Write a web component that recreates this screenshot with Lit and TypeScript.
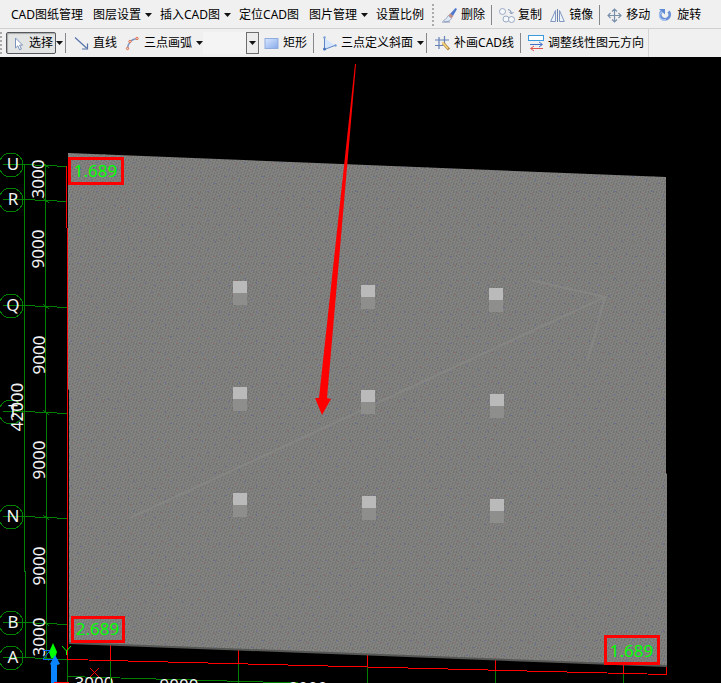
import { LitElement, html, svg, css, nothing, TemplateResult, SVGTemplateResult } from "lit";
import { customElement, property } from "lit/decorators.js";

type IconName =
  | "cursor" | "line" | "arc" | "rect" | "slope" | "patch" | "direction"
  | "erase" | "copy" | "mirror" | "move" | "rotate";

const icons: Record<IconName, SVGTemplateResult> = {
  cursor: svg`<path d="M4.5 2v10l2.3-2.2 1.8 4 1.8-.8-1.8-3.9h3z" fill="#fff" stroke="#7c93bd"/>`,
  line: svg`<path d="M1 1.5l11.500 10.500M13.500 7.500v5.500h-5.500" fill="none" stroke="#5672a8" stroke-width="1.200"/>`,
  arc: svg`<path d="M2.500 13Q3 4 11.500 2.500" fill="none" stroke="#7e95c4" stroke-width="1.300"/>
    <g fill="#fbd8cc" stroke="#e0704e"><circle cx="2.500" cy="12.500" r="1.200"/><circle cx="5" cy="5.500" r="1.200"/><circle cx="12" cy="2.500" r="1.200"/></g>`,
  rect: svg`<defs><linearGradient id="g" x2="1" y2="1"><stop stop-color="#dbe8ff"/><stop offset="1" stop-color="#86a9ea"/></linearGradient></defs>
    <rect x="1" y="2.500" width="13" height="10" fill="url(#g)" stroke="#90abdd"/>`,
  slope: svg`<path d="M2.500 2v11.500L13 9.500z" fill="#d5e5fb"/><path d="M2.500 1v12.500L14 9" fill="none" stroke="#5f86c4"/><circle cx="2.500" cy="1.500" r="1.200" fill="#7b9fd6"/><circle cx="2.500" cy="13" r="1.500" fill="#4674bc"/><circle cx="13.500" cy="9.500" r="1.200" fill="#7b9fd6"/>`,
  patch: svg`<path d="M4 1v12M9.500 0v8M0 4h14M0 9.500h8" fill="none" stroke="#6680b8" stroke-width="1.200"/><path d="M8 7l6 6.500" stroke="#b48a48" stroke-width="3"/><path d="M7 6l6 6.500" stroke="#f3d47c" stroke-width="1.500"/>`,
  direction: svg`<rect x="-.5" y="-.5" width="15" height="5" fill="#fff" stroke="#3a9be0"/><path d="M1 8.500h12M10 6l3.500 2.500L10 11" fill="none" stroke="#4472c8"/><path d="M14 12.500H2M5 10l-3.500 2.500L5 15" fill="none" stroke="#e0574f"/>`,
  erase: svg`<path d="M13.500 0l1.500 1-4 7-3-2z" fill="#4f78cc"/><path d="M8 5.500l3.300 2.500-1.600 2.300-3.500-2.500z" fill="#c78c86"/><path d="M6.200 7.500l3.500 3q-1.800 3-6.200 3.500l-2-1.500q3-1 4.700-5z" fill="#dfe8f6" stroke="#8b96ac" stroke-width=".7"/><path d="M0 14h8" stroke="#8194b8"/>`,
  copy: svg`<g fill="#f4f7fb" stroke="#9aaac2"><circle cx="3.500" cy="3.500" r="3"/><circle cx="7" cy="11" r="3"/><circle cx="12.500" cy="11.500" r="3"/></g><path d="M9 1.500q3 0 3.500 4M10.500 4l2 2 2-2" fill="none" stroke="#7890b5"/>`,
  mirror: svg`<path d="M5.500 2.500v11H.7zM9.500 2.500v11h4.800z" fill="#edf3fa" stroke="#8298c2"/><path d="M7.500 1v13" stroke="#6a82ae"/>`,
  move: svg`<path d="M7.500 1v13M1 7.500h13M5 3.500l2.500-2.500L10 3.500M5 11.500l2.500 2.500 2.500-2.500M3.500 5L1 7.500 3.500 10M11.500 5L14 7.500 11.500 10" fill="none" stroke="#7890aa" stroke-width="1.200"/>`,
  rotate: svg`<path d="M3.500 3.500A4.700 4.700 0 1 0 10.500 3.500" fill="none" stroke="#6a90d6" stroke-width="2.800"/><path d="M3.700 4A4.300 4.300 0 0 0 8 11.500" fill="none" stroke="#a9c5f2" stroke-width="1.500"/><path d="M1 1h6v5.500z" fill="#5f8bd6"/>`,
};

@customElement("tool-item")
class ToolItem extends LitElement {
  @property() label = "";
  @property() icon?: IconName;
  @property({ type: Boolean }) menu = false;
  @property({ type: Boolean }) pressed = false;

  static styles = css`
    :host { display: flex; flex: none; }
    button {
      display: flex; align-items: center; gap: 4px;
      border: 0; padding: 0 4px; background: none; color: #000;
      font: 12px/20px "Noto Sans", "Noto Sans CJK SC", sans-serif;
      white-space: nowrap;
    }
    .plain { padding: 0 5px; }
    .menu { padding-right: 0; }
    .plain.menu { padding-right: 3px; }
    .pressed {
      height: 22px; padding: 0 2px 0 4px; gap: 3px;
      border: 1px solid #55585c; border-radius: 2px;
      background: #e3e4e4; box-shadow: inset 1px 1px 1px #aaa;
    }
    .icon { width: 15px; height: 15px; overflow: visible; }
    .arrow { width: 7px; height: 4px; }
    .split { padding: 0; }
  `;

  render(): TemplateResult {
    const arrow = html`<svg class="arrow" viewBox="0 0 7 4"><path d="M0 0h7L3.500 4z" fill="#111"/></svg>`;
    const cls = [this.icon ? "" : "plain", this.menu && !this.pressed ? "menu" : "", this.pressed ? "pressed" : ""].join(" ");
    return html`<button type="button" class=${cls} aria-pressed=${this.pressed ? "true" : nothing}>
        ${this.icon ? html`<svg class="icon" viewBox="0 0 15 15">${icons[this.icon]}</svg>` : nothing}
        <span>${this.label}</span>
        ${this.menu && !this.pressed ? arrow : nothing}
      </button>
      ${this.pressed ? html`<button type="button" class="split" aria-label=${this.label}>${arrow}</button>` : nothing}`;
  }
}

const axes: [string, number][] = [["U", 165], ["R", 200], ["Q", 306], ["T", 412], ["N", 517], ["B", 623], ["A", 658]];
const spans: [string, number, number][] = [
  ["3000", 44, 179], ["9000", 44, 249], ["9000", 45, 355], ["9000", 45, 460],
  ["9000", 45, 566], ["3000", 45, 637], ["42000", 23, 407],
];
const columns: [number, number][] = [
  [233, 281], [361, 285], [489, 288],
  [233, 387], [361, 390], [490, 394],
  [233, 493], [362, 496], [490, 499],
];
const tags: [string, number, number, number, number][] = [
  ["1.689", 69, 158, 53, 25], ["2.689", 72, 617, 51, 24], ["1.689", 605, 636, 53, 27],
];
const stubs: [number, number, number][] = [[110, 645, 660], [238, 650, 663], [367, 655, 667], [495, 660, 670], [623, 665, 673]];

@customElement("model-view")
class ModelView extends LitElement {
  static styles = css`
    :host { display: block; background: #000; }
    svg { display: block; width: 100%; height: auto; }
    text { font-family: "Noto Sans", sans-serif; font-size: 17px; fill: #f2f2f2; text-anchor: middle; }
    .tag { fill: #0f0; }
    .grid { fill: none; stroke: #008000; shape-rendering: crispEdges; }
    .red { fill: none; stroke: #f00; shape-rendering: crispEdges; }
    .frame { fill: none; stroke: #f00; stroke-width: 3; shape-rendering: crispEdges; }
    .faint { fill: none; stroke: #858683; stroke-width: 2; }
  `;

  render(): TemplateResult {
    return html`<svg viewBox="0 57 721 626" role="img" aria-label="三维视图">
      <defs>
        <pattern id="grain" width="8" height="8" patternUnits="userSpaceOnUse">
          <rect width="8" height="8" fill="#7f807d"/>
          <path d="M0 0h1v1H0zM2 1h1v1H2zM5 0h1v1H5zM7 2h1v1H7zM4 3h1v1H4zM1 4h1v1H1zM6 5h1v1H6zM3 6h1v1H3zM0 7h1v1H0zM5 7h1v1H5z" fill="#6e706d"/>
          <path d="M1 2h1v1H1zM3 0h1v1H3zM6 1h1v1H6zM5 4h1v1H5zM2 5h1v1H2zM7 6h1v1H7zM4 7h1v1H4z" fill="#888986"/>
        </pattern>
        <pattern id="flecks" width="37" height="29" patternUnits="userSpaceOnUse">
          <path d="M3 2h2v1H3zM17 5h1v2H17zM29 9h2v1H29zM9 13h1v1H9zM22 17h2v1H22zM34 21h1v2H34zM6 24h2v1H6zM15 27h1v1H15z" fill="#6d6f92"/>
          <path d="M10 4h2v1H10zM24 2h1v1H24zM35 7h1v1H35zM4 10h1v1H4zM19 11h2v1H19zM13 19h2v1H13zM28 24h2v1H28zM20 22h1v1H20z" fill="#8d6c6c"/>
        </pattern>
      </defs>

      ${axes.map(([, y]) => svg`<circle class="grid" cx="11" cy=${y} r="12"/>
        <path class="grid" d="M3 ${y - 0.5}H24L46 ${y + 0.5}L67 ${y + 1.5}M43 ${y - 2}l6 5"/>`)}
      <path class="grid" d="M24.500 165V571L25.500 572V658M45.500 165V412L46.500 413V658M67.500 660V683M67 676.500L298 683"/>

      ${axes.map(([name, y]) => svg`<text x="13" y=${y + 5}>${name}</text>`)}
      ${spans.map(([label, x, y]) => svg`<text transform="translate(${x} ${y}) rotate(-90)">${label}</text>`)}
      <text x="94" y="689">3000</text><text x="179" y="691">9000</text><text x="308" y="694">9000</text>

      ${stubs.map(([x, a, b]) => svg`<path class="red" d="M${x + 0.5} ${a}V${b}"/><path class="grid" d="M${x + 0.5} ${b}V683"/>`)}
      <path class="red" d="M66.500 166V228M67.500 228V660M68 659.500L667 674.500M666.500 667V675"/>

      <path d="M69 641L667 664V667L69 644z" fill="#555755"/>
      <path d="M68 153L666 177V473L667 474V665L69 642V390L68 389z" fill="url(#grain)"/>
      <path d="M68 153L666 177V473L667 474V665L69 642V390L68 389z" fill="url(#flecks)"/>
      <path class="faint" d="M130 518L605 297M530 280L605 297L588 360"/>
      ${columns.map(([x, y]) => svg`<rect x=${x} y=${y + 12} width="14" height="12" fill="#8e8f8d"/><rect x=${x} y=${y} width="14" height="12" fill="#b9bab9"/>`)}

      <path d="M355 64L356 64L327 398L331 399L322 415L315 398L319 398z" fill="#f00"/>
      ${tags.map(([label, x, y, w, h]) => svg`<rect class="frame" x=${x + 0.5} y=${y + 0.5} width=${w} height=${h}/>
        <text class="tag" x=${x + w / 2} y=${y + h - 6}>${label}</text>`)}

      <path d="M53 643L57 652L55 658H51L49 652z" fill="#0f0"/>
      <path d="M43 659.500H58M43 650.500H50L43 659" fill="none" stroke="#0b6bff"/>
      <path d="M55 655L60 664L57 665V683H51V665L50 664z" fill="#0a84ff"/>
      <path d="M62 646l4.500 5 4.500-5M66.500 651v4" fill="none" stroke="#0f0"/>
      <path d="M90 668l9 9M99 668l-9 9M54 682.500H69" fill="none" stroke="#f00"/>
    </svg>`;
  }
}

@customElement("app-root")
class AppRoot extends LitElement {
  static styles = css`
    :host { display: flex; flex-direction: column; min-height: 100vh; background: #000; }
    .bar {
      display: flex; align-items: center; height: 28px; overflow: hidden;
      background: #f0f0f0; font: 12px/20px "Noto Sans", "Noto Sans CJK SC", sans-serif;
    }
    .top { border-bottom: 1px solid #d0d0d0; box-sizing: border-box; height: 29px; padding: 2px 0 0 6px; }
    .row { display: flex; align-items: center; align-self: stretch; flex: none; border-right: 1px solid #d4d4d4; }
    .grip { width: 6px; height: 22px; flex: none; background: radial-gradient(circle at 1px 1px, #aaa 1px, transparent 1px) 0 0 / 6px 4px; }
    .lead { width: 9px; background-position: 3px 0; background-size: 9px 4px; }
    .sep { width: 1px; height: 20px; margin: 0 3px 0 2px; flex: none; background: #85878a; }
    .row .sep { margin-right: 4px; }
    .combo { position: relative; display: flex; width: 57px; height: 22px; }
    .combo select { appearance: none; width: 100%; border: 0; background: #f4f4f4; font: inherit; }
    .drop {
      position: absolute; inset: 0 1px 0 auto; box-sizing: border-box; width: 13px;
      display: grid; place-items: center; pointer-events: none;
      border: 1px solid #6c6e70; background: #ececec;
    }
    .drop svg { width: 7px; height: 4px; }
  `;

  render(): TemplateResult {
    const sep = html`<span class="sep"></span>`;
    return html`
      <nav class="bar top" aria-label="CAD">
        <tool-item label="CAD图纸管理"></tool-item>
        <tool-item label="图层设置" menu></tool-item>
        <tool-item label="插入CAD图" menu></tool-item>
        <tool-item label="定位CAD图"></tool-item>
        <tool-item label="图片管理" menu></tool-item>
        <tool-item label="设置比例"></tool-item>
        <span class="grip lead"></span>
        <tool-item icon="erase" label="删除"></tool-item>${sep}
        <tool-item icon="copy" label="复制"></tool-item>
        <tool-item icon="mirror" label="镜像"></tool-item>${sep}
        <tool-item icon="move" label="移动"></tool-item>
        <tool-item icon="rotate" label="旋转"></tool-item>
      </nav>
      <nav class="bar" aria-label="绘图">
        <div class="row">
          <span class="grip"></span>
          <tool-item icon="cursor" label="选择" menu pressed></tool-item>${sep}
          <tool-item icon="line" label="直线"></tool-item>
          <tool-item icon="arc" label="三点画弧" menu></tool-item>
          <label class="combo">
            <select aria-label="画弧方式"><option></option></select>
            <span class="drop"><svg viewBox="0 0 7 4"><path d="M0 0h7L3.500 4z" fill="#111"/></svg></span>
          </label>
          <tool-item icon="rect" label="矩形"></tool-item>${sep}
          <tool-item icon="slope" label="三点定义斜面" menu></tool-item>${sep}
          <tool-item icon="patch" label="补画CAD线"></tool-item>${sep}
          <tool-item icon="direction" label="调整线性图元方向"></tool-item>
        </div>
      </nav>
      <model-view></model-view>
    `;
  }
}
